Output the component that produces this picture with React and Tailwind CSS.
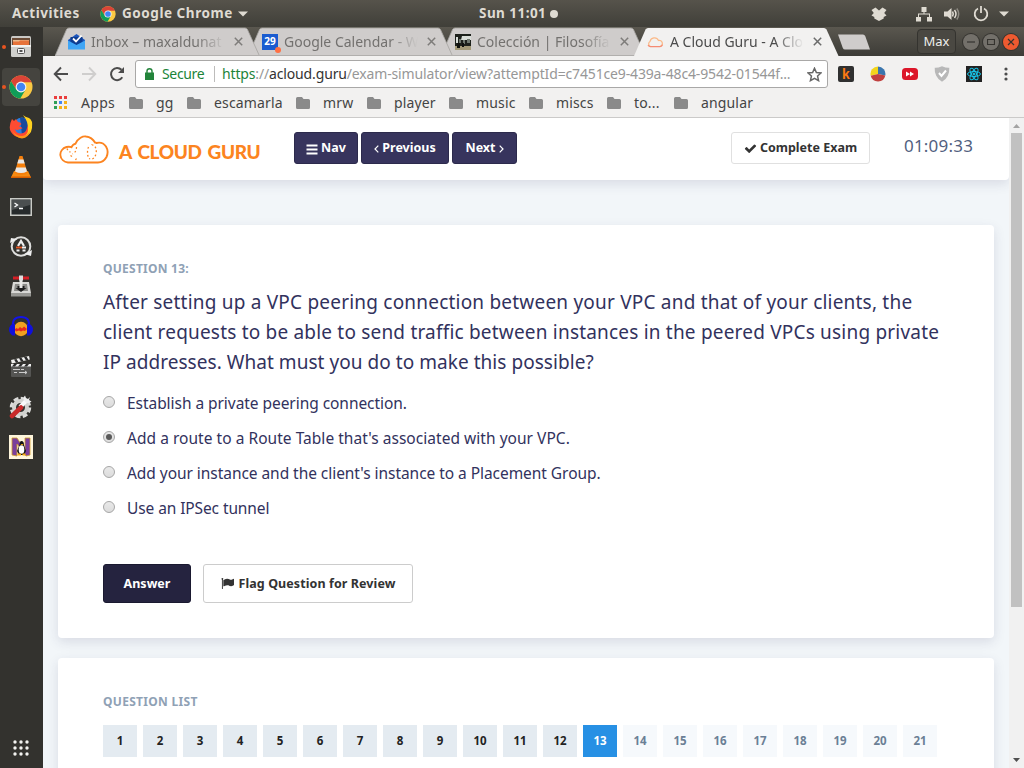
import React from "react";

const DOCK_BG = "bg-[#33322e]";

function ChromeLogo({ size = 16 }) {
  return (
    <svg width={size} height={size} viewBox="0 0 48 48" className="shrink-0">
      <circle cx="24" cy="24" r="23" fill="#fbc943" />
      <path d="M4 12.600A23 23 0 0 1 44 12.600L45.200 14.500H24L14.500 29Z" fill="#db4437" />
      <path d="M4.100 12.500A23 23 0 0 0 22.500 47L33 29.500L24 34L14.500 29Z" fill="#109d58" />
      <circle cx="24" cy="24" r="10.800" fill="#f5f5f5" />
      <circle cx="24" cy="24" r="8.500" fill="#4285f4" />
    </svg>
  );
}

function SystemBar() {
  return (
    <header className="flex h-[27px] shrink-0 items-center bg-linear-to-b from-[#56534b] to-[#403f39] text-[13.500px] font-bold text-[#dfdbd2]">
      <div className="w-[100px] pl-3 tracking-[0.500px]">Activities</div>
      <div className="flex w-[379px] items-center">
        <ChromeLogo size={16} />
        <span className="ml-1.5 w-[111px] whitespace-nowrap tracking-[0.550px]">Google Chrome</span>
        <svg width="10" height="6" viewBox="0 0 10 6" className="ml-[5px]">
          <path d="M0 .5h10L5 5.500z" fill="#dfdbd2" />
        </svg>
      </div>
      <div className="flex w-[391px] items-center">
        <span className="w-[67px] whitespace-nowrap tracking-[0.450px]">Sun 11:01</span>
        <span className="ml-1 h-2 w-2 rounded-full bg-[#dfdbd2]" />
      </div>
      <svg width="18" height="16" viewBox="0 0 18 16" className="shrink-0" fill="#dfdbd2">
        <path d="M5.500 1.500 1.500 4 3.800 7 1.500 9.500 4.300 11v1.500L9 15l4.700-2.500V11l2.800-1.500L14.200 7l2.300-3-4-2.500L9 4.500z" />
      </svg>
      <svg width="16" height="16" viewBox="0 0 16 16" className="ml-7 shrink-0" fill="#dfdbd2">
        <path d="M5.500 1h5v5h-2v1.500H14V11h2v4.500h-5V11h2V8.500H3V11h2v4.500H0V11h2V7.500h5.500V6h-2z" />
      </svg>
      <svg width="16" height="16" viewBox="0 0 16 16" className="ml-3 shrink-0" fill="none" stroke="#dfdbd2" strokeWidth="1.500">
        <path d="M0 5.500h3.500L7.500 2v12L3.500 10.500H0z" fill="#dfdbd2" stroke="none" />
        <path d="M8.500 5.500q1.500 2.500 0 5M10.500 4q3 4 0 8" />
        <path d="M12.800 2.500q3.800 5.500 0 11" stroke="#8d8a82" />
      </svg>
      <svg width="16" height="16" viewBox="0 0 16 16" className="ml-[13px] shrink-0" fill="none" stroke="#dfdbd2" strokeWidth="1.800">
        <path d="M5 2.500a6.300 6.300 0 1 0 6 0M8 0v7" />
      </svg>
      <svg width="10" height="6" viewBox="0 0 10 6" className="ml-2.5 shrink-0">
        <path d="M0 .5h10L5 5.500z" fill="#dfdbd2" />
      </svg>
    </header>
  );
}

const dockIcons = [
  <svg width="22" height="22" viewBox="0 0 22 22">
    <rect x="1" y="0" width="20" height="20" rx="1.500" fill="#c9c8c5" />
    <rect x="2" y="2" width="18" height="8" fill="#6b4a35" />
    <path d="M3 4h16v2H3z" fill="#e9b98c" />
    <path d="M3 5.500h6l1-1h9V10H3z" fill="#e7733a" />
    <path d="M1 9h20v10.500a1.500 1.500 0 0 1-1.500 1.500h-17A1.500 1.500 0 0 1 1 19.500z" fill="#d0d0cd" />
    <path d="M1 9h20v2H1z" fill="#f2f2f0" />
    <rect x="7.500" y="12.500" width="7" height="5" rx="1" fill="#f6f6f6" stroke="#555" />
    <path d="M9.500 14h3v2h-3z" fill="#555" />
  </svg>,
  <ChromeLogo size={24} />,
  <svg width="24" height="24" viewBox="0 0 24 24">
    <circle cx="13" cy="11.500" r="9" fill="#2a7fe0" />
    <path d="M11 3q5-1 7 3t3 8-8 6z" fill="#174a9c" />
    <path d="M3 4Q-1 12 2 17t9.500 5.500Q23 22 22 12q0-5-3-8 1 4-1 9-1 5-6 5.500-5 0-6-4.500 1.500 1.500 4 .5 2-1 3.500-1-1-2-3.500-2 1-1.500 2.500-2.500-1-2-3.500-2L7 4 5 6z" fill="#ff4b32" />
    <path d="M14 0q3 4 4 7t1 8-5 6q8 0 9-8t-3-10q-4-1-6-3" fill="#ffd21f" />
    <path d="M3 15q3 6 10 6 6 0 8-6-1 8-8 8.500Q6 23 3 15z" fill="#ff9417" />
  </svg>,
  <svg width="22" height="24" viewBox="0 0 22 24">
    <path d="m4 16-3 6.500h20L18 16z" fill="#f68b12" />
    <path d="M9.500 1h3l5 17q-6.500 4-13 0z" fill="#f57f0b" />
    <path d="m8.500 4.500-1.200 4h7.400l-1.200-4zM6.200 12.500 5 16.500q6 3 12 0l-1.200-4z" fill="#e8e8e8" />
    <path d="M1 21.500h20v1.500H1z" fill="#d95f00" />
  </svg>,
  <svg width="22" height="18" viewBox="0 0 22 18">
    <rect width="22" height="18" fill="#c9cbc6" />
    <rect x="1.500" y="1.500" width="19" height="15" fill="#272b2c" />
    <path d="M2 2h18v5L2 12z" fill="#4b4f50" />
    <path d="m4.500 5 3 2-3 2M9 10.500h4" fill="none" stroke="#fff" strokeWidth="1.300" />
  </svg>,
  <svg width="24" height="24" viewBox="0 0 24 24">
    <circle cx="12" cy="11.500" r="9.300" fill="none" stroke="#dededc" strokeWidth="2" />
    <path d="m1 8 1-5 6.500 1zM23 15l-1 6-6.500-2z" fill="#eee" />
    <path d="m9 11 3-5 3 5" fill="none" stroke="#eee" strokeWidth="2.200" />
    <path d="M7 12.500h6" stroke="#e95420" strokeWidth="1.800" />
    <path d="M13 12.500h4M7.500 15.500h3m3 0h3" stroke="#eee" strokeWidth="1.800" />
  </svg>,
  <svg width="22" height="24" viewBox="0 0 22 24">
    <path d="M3 7h16l2 11v3H1v-3z" fill="#d8d8d5" />
    <path d="M1 18h20v3.500H1z" fill="#989894" />
    <path d="M5 9h12l1 7H4z" fill="#8b8b88" />
    <path d="M7.500 11h7v2h2L11 17l-5.500-4h2z" fill="#1e1e1e" />
    <path d="M9.500 4h3v9h-3z" fill="#e9e9e7" />
    <path d="M3 1.500h6v3H3zM13 1.500h6v3h-6z" fill="#d31f26" />
    <path d="M9 .5h4v5H9z" fill="#ddd" />
  </svg>,
  <svg width="24" height="22" viewBox="0 0 24 22">
    <circle cx="12" cy="13" r="7.200" fill="#f0a020" />
    <path d="m5.500 13.500 2-1.500 1.500 1 2-2 2 1.500 2-2 3 2.500-2 2-2-.5-2 1-2-1-3 1z" fill="#e8261c" />
    <path d="M4 10Q3 1 12 1T20 10" fill="none" stroke="#1414e6" strokeWidth="2" />
    <path d="M6 8v11.500H3.500Q0 17 0 13.500T3.500 8zM18 8v11.500h2.500q3.500-2.500 3.500-6T20.500 8z" fill="#1010db" />
  </svg>,
  <svg width="22" height="24" viewBox="0 0 22 24">
    <path d="m1 5 18-4 .8 3.500-18 4z" fill="#f0f0ee" />
    <path d="m4 4.500 2 3.200 2.500-.5-2-3.300zM9 3.200l2 3.300 2.500-.5-2-3.300zM14 2.200 16 5.500l2.500-.6-2-3.300z" fill="#2a2a2a" />
    <rect x="1" y="9" width="20" height="13" rx="1" fill="#555553" />
    <path d="M1 9h20v2.500H1z" fill="#eee" />
    <path d="m4 9-2 2.500h3L7 9zM10 9l-2 2.500h3L13 9zM16 9l-2 2.500h3L19 9z" fill="#2a2a2a" />
    <path d="M3 14.500h7m1 0h3M4 17.500h3m2 0h8M15 16l2 1.500-2 1.500" stroke="#ccc" fill="none" />
  </svg>,
  <svg width="24" height="24" viewBox="0 0 24 24">
    <circle cx="11.500" cy="12.500" r="8.500" fill="none" stroke="#dcdcda" strokeWidth="4.500" strokeDasharray="4.500 2.170" />
    <circle cx="11.500" cy="12.500" r="6.500" fill="none" stroke="#d2d2cf" strokeWidth="4" />
    <path d="m11 12 7-7" stroke="#fafafa" strokeWidth="4" />
    <path d="M16 .5q-3 3 0 6t6.500 0L20 5l1-3-2 2-2-1z" fill="#eee" />
    <path d="m3 21 9-8.500" stroke="#c92a2a" strokeWidth="4.500" strokeLinecap="round" />
  </svg>,
  <svg width="24" height="24" viewBox="0 0 24 24">
    <rect width="24" height="24" fill="#fff6dc" />
    <path d="M3 3h5l8 12V3h5v17l-4 1L8 9v12l-5-1z" fill="#7b3f9b" stroke="#cf9d28" strokeWidth=".8" />
    <path d="M12.500 6q2.500 0 2.500 4l2 6-2 4h-5l-2-4 2.500-6q0-4 2-4" fill="#141414" />
    <ellipse cx="12.500" cy="14.500" rx="2.800" ry="4.300" fill="#fff" />
    <path d="M11.500 9h3L13 10.500zM8.500 18.500H12v2H8.500zM13.500 18.500h3v2h-3z" fill="#f5a911" />
  </svg>,
];

function Dock() {
  return (
    <nav className={`flex w-[43px] shrink-0 flex-col ${DOCK_BG}`}>
      {dockIcons.map((icon, i) => (
        <div key={i} className="relative flex h-10 items-center pl-[2px]">
          <span className={i === 1 ? "flex h-[38px] w-[38px] items-center justify-center rounded bg-[#45443f]" : "flex h-[38px] w-[38px] items-center justify-center"}>
            {icon}
          </span>
          {i < 2 && <span className="absolute top-[18px] left-[2px] h-1 w-1 rounded-full bg-[#e95420]" />}
        </div>
      ))}
      <svg width="17" height="17" viewBox="0 0 17 17" className="mt-auto mb-[11px] ml-[13px]" fill="#f3f3f0">
        {[2, 8, 14].map((y) => [2, 8, 14].map((x) => <circle key={`${x}-${y}`} cx={x} cy={y} r="1.700" />))}
      </svg>
    </nav>
  );
}

const CloudIcon = (
  <svg width="16" height="16" viewBox="0 0 16 16" fill="none" strokeWidth="1.200">
    <path d="M3.500 12.500A2.800 2.800 0 0 1 3 7.500a4.500 4.500 0 0 1 8.500-1 3 3 0 0 1 1.500 6z" stroke="#fbb987" />
    <path d="M1 11q1 1.700 2.500 1.600H13q2-.2 2.500-2" stroke="#f58b73" />
  </svg>
);

const tabs = [
  {
    title: "Inbox – maxaldunat",
    layer: "z-30",
    icon: (
      <svg width="17" height="16" viewBox="0 0 17 16">
        <path d="M0 6 8.500 0 17 6v4H0z" fill="#1c55bd" />
        <path d="M2.500 3h12v6l-6 3-6-3z" fill="#0d3c91" />
        <path d="m5 4.500 3 3 5.500-6" stroke="#fff" strokeWidth="1.800" fill="none" />
        <path d="M0 6.500 8.500 11 17 6.500V15.500H0z" fill="#3fa5f5" />
      </svg>
    ),
  },
  {
    title: "Google Calendar - W",
    layer: "z-20",
    icon: (
      <span className="relative ml-px flex h-4 w-4 items-center justify-center bg-[#1a5cd0] text-[10px] font-bold text-white">
        29
        <span className="absolute -right-[3px] -bottom-[3px] h-1.5 w-1.5 rounded-full bg-[#ff7043]" />
      </span>
    ),
  },
  {
    title: "Colección | Filosofía",
    layer: "z-10",
    icon: (
      <svg width="16" height="16" viewBox="0 0 16 16" className="ml-px">
        <path d="M0 0h16v16H0z" fill="#1d211c" />
        <path d="M7 2h9v4H6zM1 3h2v6H1z" fill="#d8ddd8" />
        <path d="M4 5h2v4H4zM8 6h2v4H8zM12 5h3v4h-3z" fill="#6f786f" />
        <path d="M0 12h16v4H0z" fill="#a39a78" />
        <path d="M2 9h3v5H2zM7 9h2v4H7z" fill="#10120f" />
      </svg>
    ),
  },
  { title: "A Cloud Guru - A Clo", layer: "z-40", active: true, icon: CloudIcon },
];

function Tab({ tab }) {
  return (
    <div className={`relative -mr-3 flex h-[29px] w-[205px] shrink-0 items-center pl-[13px] ${tab.layer}`}>
      <svg width="205" height="29" viewBox="0 0 205 29" className="absolute inset-0">
        <path
          d="M0 29 11.500 2.500Q12.500 1 14 1H190Q191.500 1 192.500 2.500L204.500 29z"
          fill={tab.active ? "#f2f1f0" : "#cfcccb"}
          stroke={tab.active ? "none" : "#a5a3a0"}
          strokeWidth=".8"
        />
        {!tab.active && <path d="M0 28.500h205" stroke="#b1afad" />}
      </svg>
      <span className="relative flex w-[17px] shrink-0">{tab.icon}</span>
      <span
        className={`relative ml-1.5 w-[138px] text-[14px] whitespace-nowrap [mask-image:linear-gradient(to_right,#000_76%,transparent_97%)] ${tab.active ? "text-[#4c4c4c]" : "text-[#73716f]"}`}
      >
        {tab.title}
      </span>
      <svg width="9" height="9" viewBox="0 0 9 9" className="relative ml-[5px] shrink-0" stroke={tab.active ? "#6b6b6b" : "#7e7c7a"} strokeWidth="1.500">
        <path d="m.8.8 7.400 7.400M8.200.8.8 8.200" />
      </svg>
    </div>
  );
}

function TabStrip() {
  return (
    <div className="flex h-[29px] items-center bg-linear-to-b from-[#5a574f] to-[#3d3c37] pl-3">
      {tabs.map((t) => (
        <Tab key={t.title} tab={t} />
      ))}
      <svg width="34" height="16" viewBox="0 0 34 16" className="ml-2.5 shrink-0">
        <path d="M1 .5h25q1.500 0 2.200 1.500L33 15.500H8q-1.500 0-2.200-1.500z" fill="#cfcccb" />
      </svg>
      <div className="ml-[46px] flex h-[25px] w-[39px] items-center justify-center rounded border border-[#34332f] bg-[#4a4842] text-[13px] text-[#eeeeec]">Max</div>
      <div className="ml-[7px] flex gap-1">
        {["bg-[#73706a]", "bg-[#73706a]", "bg-[#ee5a30]"].map((c, i) => (
          <span key={i} className={`flex h-4 w-4 items-center justify-center rounded-full ring-1 ring-[#34332f] ${c}`}>
            <svg width="8" height="8" viewBox="0 0 8 8" fill="none" stroke="#35332f" strokeWidth="1.200">
              <path d={["M0 4h8", "M.5 1.500h7v5h-7z", "m1 1 6 6M7 1 1 7"][i]} />
            </svg>
          </span>
        ))}
      </div>
    </div>
  );
}

function Toolbar() {
  return (
    <div className="flex h-9 items-center bg-[#f2f1f0] pl-2.5">
      <svg width="16" height="16" viewBox="0 0 16 16" fill="none" stroke="#4c4c4c" strokeWidth="1.900">
        <path d="M15 8H2M8 1.500 1.700 8 8 14.500" />
      </svg>
      <svg width="16" height="16" viewBox="0 0 16 16" className="ml-3" fill="none" stroke="#cfcecd" strokeWidth="1.900">
        <path d="M1 8h13M8 1.500 14.300 8 8 14.500" />
      </svg>
      <svg width="16" height="16" viewBox="0 0 16 16" className="ml-3" fill="none" stroke="#4c4c4c" strokeWidth="2">
        <path d="M13.300 11.300A6.100 6.100 0 1 1 12.500 3.800" />
        <path d="M15 1v6H9z" fill="#4c4c4c" stroke="none" />
      </svg>
      <div className="ml-2.5 flex h-7 w-[693px] items-center rounded-[3px] border border-[#a9a8a7] bg-white text-[14px] whitespace-nowrap">
        <svg width="9" height="12" viewBox="0 0 9 12" className="ml-[9px]">
          <path d="M0 4.500h9V12H0z" fill="#23843b" />
          <path d="M2 5V3q0-2.200 2.500-2.200T7 3v2" fill="none" stroke="#23843b" strokeWidth="1.400" />
        </svg>
        <span className="ml-2 w-[52px] pb-px tracking-[-0.350px] text-[#1c8439]">Secure</span>
        <span className="h-4 w-px bg-[#bdbcbb]" />
        <span className="ml-[7px] w-[578px] pb-px tracking-[-0.150px] text-[#979797]">
          <span className="text-[#1c8439]">https</span>://<span className="text-[#333]">acloud.guru</span>/exam-simulator/view?attemptId=c7451ce9-439a-48c4-9542-01544f...
        </span>
        <svg width="15" height="15" viewBox="0 0 24 24" className="ml-[7px]" fill="none" stroke="#666" strokeWidth="2.400">
          <path d="m12 2 3 6.800 7.500.7-5.600 5 1.600 7.300L12 18l-6.500 3.800 1.600-7.300-5.600-5 7.500-.7z" />
        </svg>
      </div>
      <div className="ml-2.5 flex w-[144px] shrink-0 items-center justify-between">
        <span className="flex h-4 w-4 items-center justify-center rounded-[2px] bg-[#303030] font-['Liberation_Sans',sans-serif] text-[14px] font-bold text-[#ff7a12]">k</span>
        <svg width="16" height="16" viewBox="0 0 16 16">
          <path d="M8 8V.5A7.500 7.500 0 0 1 15.300 9.500z" fill="#3b76ae" />
          <path d="M8 8V.5A7.500 7.500 0 0 0 .7 9.800z" fill="#f2d41c" />
          <path d="M8 8 .7 9.800a7.500 7.500 0 0 0 14.600-.3z" fill="#c1403f" />
        </svg>
        <svg width="16" height="12" viewBox="0 0 16 12">
          <rect width="16" height="12" rx="3.500" fill="#dc1629" />
          <path d="m4 3.500 4 2.500-4 2.500zM8 3.500 12 6 8 8.500z" fill="#fff" />
        </svg>
        <svg width="16" height="16" viewBox="0 0 16 16">
          <path d="M8 .3q4 1.700 7.300 1.500.3 4-1.500 8T8 15.700Q4 13.500 2.200 9.800T.7 1.800Q4 2 8 .3" fill="#b8b8b8" />
          <path d="m5 7 2.500 3L12 4.500" fill="none" stroke="#fff" strokeWidth="2" />
        </svg>
        <svg width="16" height="16" viewBox="0 0 16 16" fill="none" stroke="#17c3e8">
          <path d="M0 0h16v16H0z" fill="#222" stroke="none" />
          <ellipse cx="8" cy="8" rx="6.500" ry="2.500" />
          <ellipse cx="8" cy="8" rx="6.500" ry="2.500" transform="rotate(60 8 8)" />
          <ellipse cx="8" cy="8" rx="6.500" ry="2.500" transform="rotate(120 8 8)" />
          <circle cx="8" cy="8" r="1" fill="#17c3e8" />
        </svg>
      </div>
      <svg width="4" height="14" viewBox="0 0 4 14" className="ml-[22px]" fill="#4c4c4c">
        <circle cx="2" cy="2" r="1.600" />
        <circle cx="2" cy="7" r="1.600" />
        <circle cx="2" cy="12" r="1.600" />
      </svg>
    </div>
  );
}

const bookmarks = [
  ["gg", "w-[58px]"],
  ["escamarla", "w-[109px]"],
  ["mrw", "w-[71px]"],
  ["player", "w-[82px]"],
  ["music", "w-[80px]"],
  ["miscs", "w-[78px]"],
  ["to...", "w-[67px]"],
  ["angular", "w-[90px]"],
];

function BookmarksBar() {
  const colors = ["#ea3d3d", "#ea3d3d", "#ea3d3d", "#2f9e57", "#4285f4", "#f5b21a", "#2f9e57", "#f5b21a", "#f5b21a"];
  return (
    <div className="flex h-[26px] items-center border-b border-[#cbcac9] bg-[#f2f1f0] pb-1 pl-[11px] text-[14px] text-[#444]">
      <svg width="13" height="13" viewBox="0 0 13 13" className="-mt-px">
        {colors.map((c, i) => (
          <path key={i} d={`M${(i % 3) * 5} ${Math.floor(i / 3) * 5}h3v3h-3z`} fill={c} />
        ))}
      </svg>
      <span className="ml-3.5 w-12 tracking-[0.300px]">Apps</span>
      {bookmarks.map(([name, width]) => (
        <div key={name} className={`flex items-center ${width}`}>
          <svg width="14" height="12" viewBox="0 0 14 12" className="shrink-0" fill="#8a8a8a">
            <path d="M1.500 0H6l1.500 2h5Q14 2 14 3.500v7q0 1.500-1.500 1.500h-11Q0 12 0 10.500v-9Q0 0 1.500 0" />
          </svg>
          <span className="ml-[13px] whitespace-nowrap tracking-[0.150px]">{name}</span>
        </div>
      ))}
    </div>
  );
}

function GuruLogo() {
  return (
    <div className="flex w-[236px] items-center pt-px">
      <svg width="51" height="30" viewBox="0 0 51 30" fill="none" stroke="#fc8420" strokeWidth="1.900">
        <path d="M10 27.500a9 8 0 0 1-1.500-15.500q3-.5 5 .2 1.500-3.200 4-3.500C20 3 25 1 28 1.500q6 .8 9 6 .8 0 1.500.5 6-1.500 9.500 3.500 3 5 .5 10.500-3 5.500-8.500 5.500z" />
        <path d="M9 13.500q1 3 3.500 3.500m6-5q0 5-4 7m-2 1.500 3 2m3 1-2 3M30.500 12q-2 5 0 11m3-13.500q6 2 4.500 9t-7 5" strokeWidth="1.300" strokeDasharray="1.800 2.200" />
      </svg>
      <span className="ml-2.5 pt-[3px] font-['Lato',sans-serif] text-[19px] leading-none font-black tracking-[-0.400px] [word-spacing:2px] whitespace-nowrap text-[#fc8420]">A CLOUD GURU</span>
    </div>
  );
}

const navButton = "mb-0.5 flex h-8 items-center justify-center rounded-[3px] border border-[#2c2a4c] bg-[#37345d] pt-px text-[12.500px] font-bold text-white";
const shadow = "shadow-[0_4px_12px_rgba(50,50,93,0.130)]";

function ExamHeader() {
  return (
    <div className={`flex h-[62px] shrink-0 items-center rounded-b bg-white pl-[15px] ${shadow}`}>
      <GuruLogo />
      <button className={`w-16 ${navButton}`}>
        <svg width="12" height="12" viewBox="0 0 12 12" fill="#fff">
          <path d="M.5 1.500h11v2H.5zM.5 5.500h11v2H.5zM.5 9.500h11v2H.5z" />
        </svg>
        <span className="ml-[3px]">Nav</span>
      </button>
      <button className={`ml-[3px] w-[88px] ${navButton}`}>
        <svg width="5" height="8" viewBox="0 0 5 8" fill="none" stroke="#fff" strokeWidth="1.200">
          <path d="M4.300.7 1 4l3.300 3.300" />
        </svg>
        <span className="ml-[3px]">Previous</span>
      </button>
      <button className={`ml-[3px] w-[65px] ${navButton}`}>
        <span className="mr-[3px]">Next</span>
        <svg width="5" height="8" viewBox="0 0 5 8" fill="none" stroke="#fff" strokeWidth="1.200">
          <path d="M.7.7 4 4 .7 7.300" />
        </svg>
      </button>
      <button className="mb-0.5 ml-[214px] flex h-8 w-[139px] items-center justify-center rounded-[3px] border border-[#e0e0e0] bg-white pt-px text-[12.500px] font-bold whitespace-nowrap text-[#333]">
        <svg width="13" height="13" viewBox="0 0 1792 1792" fill="#333">
          <path d="M1671 566q0 40-28 68l-724 724-136 136q-28 28-68 28t-68-28l-136-136-362-362q-28-28-28-68t28-68l136-136q28-28 68-28t68 28l294 295 656-657q28-28 68-28t68 28l136 136q28 28 28 68z" />
        </svg>
        <span className="ml-[3px]">Complete Exam</span>
      </button>
      <span className="ml-[34px] pb-[7px] text-[17px] tracking-[0.200px] text-[#525f7f]">01:09:33</span>
    </div>
  );
}

const answers = [
  ["Establish a private peering connection.", "tracking-[-0.050px]"],
  ["Add a route to a Route Table that's associated with your VPC.", "tracking-[0.035px]"],
  ["Add your instance and the client's instance to a Placement Group.", "tracking-[-0.050px]"],
  ["Use an IPSec tunnel", "tracking-[-0.100px]"],
];

function QuestionCard() {
  return (
    <section className={`mt-[45px] h-[413px] w-[936px] shrink-0 rounded bg-white px-[45px] pt-[34px] ${shadow}`}>
      <h2 className="h-5 text-[12px] leading-5 font-bold tracking-[0.250px] text-[#8fa1b5]">QUESTION 13:</h2>
      <p className="mt-2 text-[19px] leading-[30px] whitespace-nowrap text-[#32325d]">
        <span className="block tracking-[0.207px]">After setting up a VPC peering connection between your VPC and that of your clients, the</span>
        <span className="block tracking-[0.196px]">client requests to be able to send traffic between instances in the peered VPCs using private</span>
        <span className="block tracking-[0.045px]">IP addresses. What must you do to make this possible?</span>
      </p>
      <ul className="mt-[9px]">
        {answers.map(([text, tracking], i) => (
          <li key={text} className="flex h-[35px] items-center">
            <span className="mb-1 flex h-3 w-3 items-center justify-center rounded-full border border-[#a6a6a6] bg-linear-to-b from-[#e9e9e9] to-[#dcdcdc]">
              {i === 1 && <span className="h-1.5 w-1.5 rounded-full bg-[#5a5a5a]" />}
            </span>
            <span className={`ml-3 text-[15.500px] whitespace-nowrap text-[#32325d] ${tracking}`}>{text}</span>
          </li>
        ))}
      </ul>
      <div className="mt-[38px] flex gap-3 text-[12.500px] font-bold">
        <button className="h-[39px] w-[88px] rounded-[3px] border border-[#1a1930] bg-[#25233f] pt-0.5 text-white">Answer</button>
        <button className="flex h-[39px] w-[210px] items-center justify-center rounded-[3px] border border-[#ccc] bg-white whitespace-nowrap text-[#333]">
          <svg width="13" height="13" viewBox="0 0 1792 1792" fill="#333">
            <path d="M320 256q0 72-64 110v1266q0 13-9.500 22.500t-22.500 9.500h-64q-13 0-22.500-9.500t-9.500-22.500v-1266q-64-38-64-110 0-53 37.500-90.500t90.500-37.500 90.500 37.500 37.500 90.500zm1472 64v763q0 25-12.500 38.500t-39.500 27.500q-215 116-369 116-61 0-123.500-22t-108.500-48-115.500-48-142.500-22q-192 0-464 146-17 9-33 9-26 0-45-19t-19-45v-742q0-32 31-55 21-14 79-43 236-120 421-120 107 0 200 29t219 88q38 19 88 19 54 0 117.500-21t110-47 88-47 54.500-21q26 0 45 19t19 45z" />
          </svg>
          <span className="ml-[5px] pt-0.5 tracking-[0.080px]">Flag Question for Review</span>
        </button>
      </div>
    </section>
  );
}

function QuestionList() {
  return (
    <section className={`mt-5 h-[200px] w-[936px] shrink-0 rounded bg-white px-[45px] pt-[34px] ${shadow}`}>
      <h2 className="h-5 text-[12px] leading-5 font-bold tracking-[0.300px] text-[#8fa1b5]">QUESTION LIST</h2>
      <div className="mt-[13px] flex gap-1.5">
        {Array.from({ length: 21 }, (_, i) => i + 1).map((n) => {
          const tone =
            n < 13 ? "bg-[#e4ebf1] text-[#222]" : n === 13 ? "bg-[#2790e4] text-white" : "bg-[#f6f9fc] text-[#6b7f95]";
          return (
            <span key={n} className={`flex h-8 w-[34px] items-center justify-center text-[11.500px] font-bold ${tone}`}>
              {n}
            </span>
          );
        })}
      </div>
    </section>
  );
}

function Scrollbar() {
  return (
    <div className="flex w-[15px] shrink-0 flex-col items-center bg-[#f1f1f1]">
      <svg width="7" height="4" viewBox="0 0 7 4" className="mt-[6px] shrink-0">
        <path d="M0 4h7L3.500 0z" fill="#a3a3a3" />
      </svg>
      <div className="mt-[5px] h-[474px] w-[11px] shrink-0 bg-[#c1c1c1]" />
      <svg width="7" height="4" viewBox="0 0 7 4" className="mt-auto mb-[6px] shrink-0">
        <path d="M0 0h7L3.500 4z" fill="#505050" />
      </svg>
    </div>
  );
}

export default function App() {
  return (
    <div className="flex h-[768px] w-[1024px] flex-col overflow-hidden font-['Noto_Sans',sans-serif]">
      <SystemBar />
      <div className="flex min-h-0 flex-1">
        <Dock />
        <div className="flex min-h-0 w-[981px] flex-col">
          <TabStrip />
          <Toolbar />
          <BookmarksBar />
          <div className="flex min-h-0 flex-1 bg-[#f2f6f9]">
            <main className="flex w-[966px] flex-col overflow-hidden">
              <ExamHeader />
              <div className="flex flex-col pl-[15px]">
                <QuestionCard />
                <QuestionList />
              </div>
            </main>
            <Scrollbar />
          </div>
        </div>
      </div>
    </div>
  );
}
